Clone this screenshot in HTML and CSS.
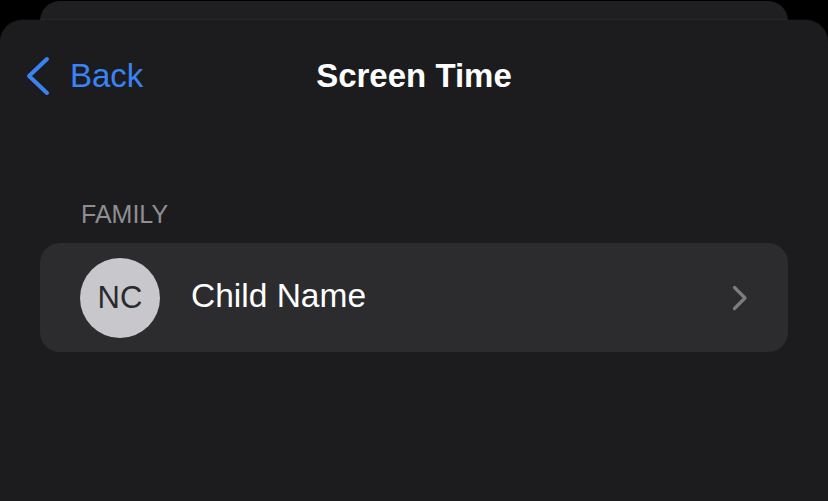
FILE: index.html
```html
<!DOCTYPE html>
<html>
<head>
<meta charset="utf-8">
<link rel="stylesheet" href="styles.css">
</head>
<body>
<div class="back-sheet"></div>
<div class="sheet">
  <div class="nav">
    <div class="nav-left">
      <svg class="back-chevron" width="24" height="40" viewBox="0 0 24 40">
        <path d="M21 3 L3 20 L21 37" fill="none" stroke="#3a83f5" stroke-width="4" stroke-linecap="round" stroke-linejoin="round"/>
      </svg>
      <span class="back-text">Back</span>
    </div>
    <div class="nav-title">Screen Time</div>
    <div class="nav-right"></div>
  </div>
  <div class="section-header">FAMILY</div>
  <div class="card">
    <div class="avatar">NC</div>
    <div class="name">Child Name</div>
    <svg class="chevron" width="16" height="26" viewBox="0 0 16 26">
      <path d="M2.5 2.5 L13 13 L2.5 23.5" fill="none" stroke="#7b7b80" stroke-width="3.2" stroke-linecap="round" stroke-linejoin="round"/>
    </svg>
  </div>
</div>
</body>
</html>
```
FILE: styles.css
```css
html, body {
  margin: 0;
  padding: 0;
  background: #000;
  font-family: "Liberation Sans", Arial, sans-serif;
  overflow: hidden;
}
body {
  width: 828px;
  height: 501px;
}
.back-sheet {
  height: 20px;
  margin: 0 40px;
  margin-top: 1px;
  margin-bottom: -1px;
  background: #1f1f21;
  border-radius: 20px 20px 0 0;
}
.sheet {
  height: 481px;
  background: #1c1c1e;
  border-radius: 22px 22px 0 0;
  box-shadow: 0 -1px 0 rgba(255,255,255,0.03);
}
.nav {
  display: grid;
  grid-template-columns: 1fr auto 1fr;
  align-items: center;
  height: 72px;
  padding-top: 20px;
}
.nav-left {
  display: flex;
  align-items: center;
  padding-left: 26px;
  gap: 20px;
}
.back-chevron {
  display: block;
}
.back-text {
  color: #3a83f5;
  font-size: 33px;
  line-height: 40px;
}
.nav-title {
  color: #fff;
  font-size: 33px;
  font-weight: bold;
  line-height: 40px;
}
.section-header {
  margin-top: 88px;
  padding-left: 81px;
  color: #8e8e93;
  font-size: 25px;
  line-height: 28px;
}
.card {
  margin: 15px 40px 0;
  height: 109px;
  background: #2c2c2e;
  border-radius: 20px;
  display: flex;
  align-items: center;
  padding: 0 40px;
}
.avatar {
  width: 80px;
  height: 80px;
  border-radius: 50%;
  background: #c7c7cc;
  color: #2a2a2c;
  font-size: 31px;
  display: flex;
  align-items: center;
  justify-content: center;
  flex-shrink: 0;
}
.name {
  margin-left: 31px;
  padding-bottom: 4px;
  color: #fff;
  font-size: 33.5px;
  flex: 1;
}
.chevron {
  display: block;
}
```
